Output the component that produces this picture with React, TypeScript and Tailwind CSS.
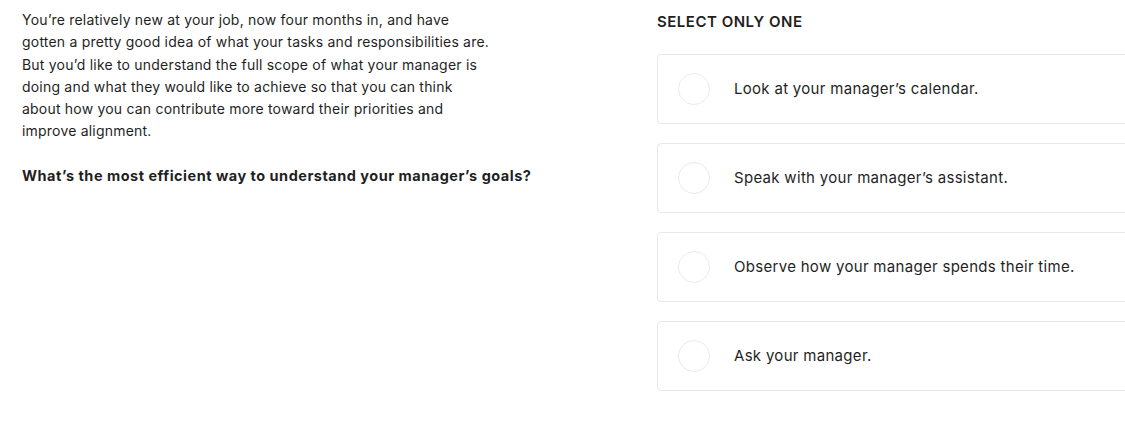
import React, { useState } from 'react';

const options = [
  'Look at your manager\u2019s calendar.',
  'Speak with your manager\u2019s assistant.',
  'Observe how your manager spends their time.',
  'Ask your manager.',
];

// kept on the same breaks as the source layout
const lines = [
  'You\u2019re relatively new at your job, now four months in, and have',
  'gotten a pretty good idea of what your tasks and responsibilities are.',
  'But you\u2019d like to understand the full scope of what your manager is',
  'doing and what they would like to achieve so that you can think',
  'about how you can contribute more toward their priorities and',
  'improve alignment.',
];

export default function App() {
  const [selected, setSelected] = useState<number | null>(null);

  return (
    <div
      className="flex w-[1125px] h-[430px] bg-white text-[#1f1f1f] overflow-hidden"
      style={{ fontFamily: 'Inter, "Noto Sans", sans-serif' }}
    >
      <div className="w-[635px] shrink-0 pl-[22px] pt-[9px]">
        <div className="text-[14px] leading-[22.3px] tracking-[0.2px] whitespace-nowrap">
          <p>
            {lines.map((l, i) => (
              <React.Fragment key={i}>
                {l}
                {i < lines.length - 1 && <br />}
              </React.Fragment>
            ))}
          </p>
          <p className="mt-[22px] text-[14.5px] font-bold tracking-[0.5px]">
            What’s the most efficient way to understand your manager’s goals?
          </p>
        </div>
      </div>

      <div className="flex-1 pl-[22px] pt-[13px] overflow-hidden">
        <div className="text-[15px] font-semibold tracking-[0.5px] leading-[18px] uppercase">Select only one</div>
        <div className="mt-[23px] flex flex-col gap-[19px] w-[520px]">
          {options.map((opt, i) => (
            <button
              key={opt}
              onClick={() => setSelected(i)}
              className="flex items-center h-[70px] border border-[#e8e8e8] rounded-[4px] bg-white text-left"
            >
              <span
                className={`ml-[20px] w-[32px] h-[32px] rounded-full border-[1.5px] shrink-0 ${
                  selected === i ? 'border-[#1f1f1f] bg-[#1f1f1f]' : 'border-[#ebebeb]'
                }`}
              />
              <span className="ml-[24px] text-[15px] tracking-[0.3px]">{opt}</span>
            </button>
          ))}
        </div>
      </div>
    </div>
  );
}
